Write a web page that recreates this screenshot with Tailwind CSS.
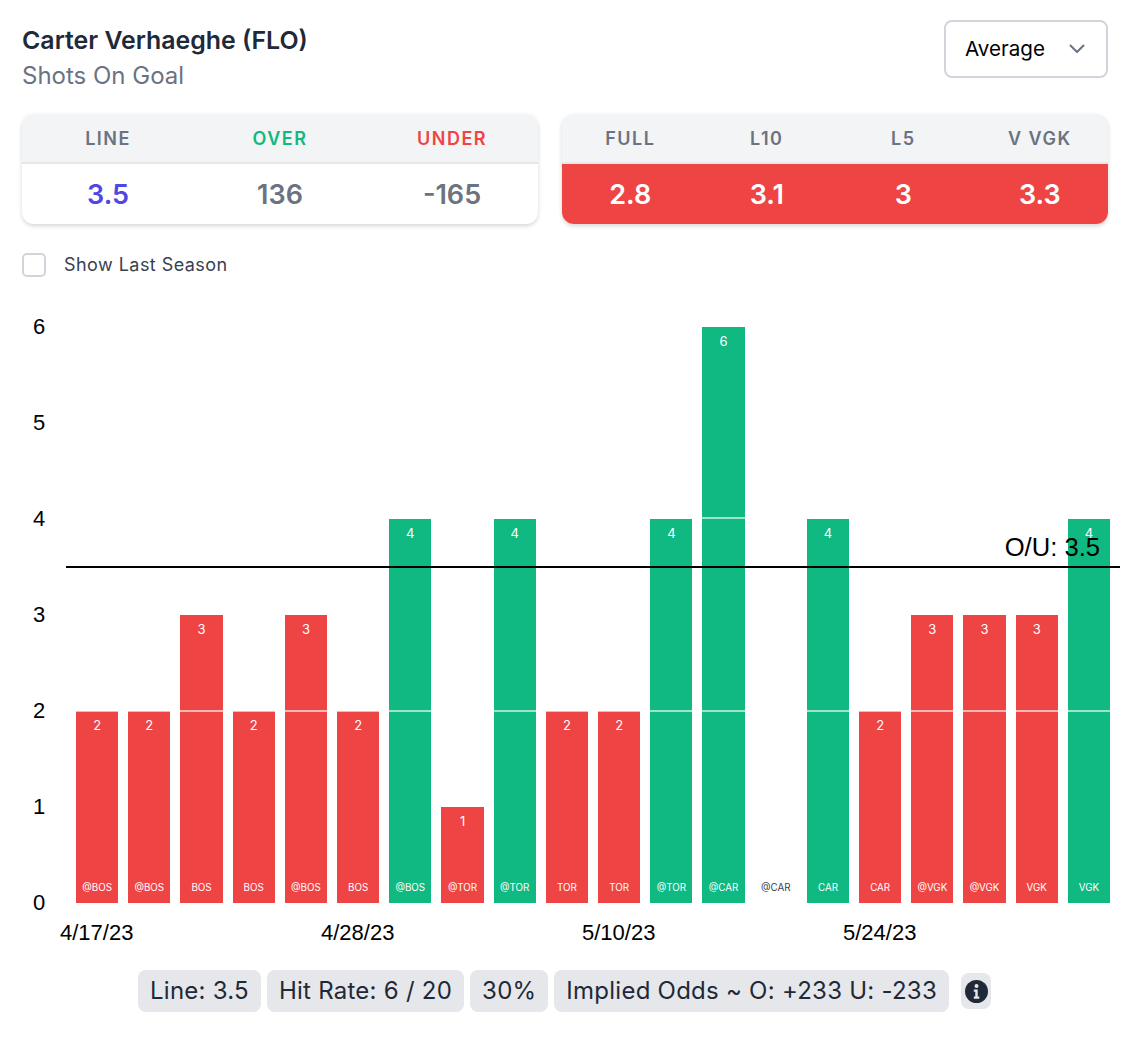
<!DOCTYPE html>
<html><head><meta charset="utf-8"><script src="https://cdn.jsdelivr.net/npm/@tailwindcss/browser@4"></script></head>
<body class="bg-white font-['Inter',sans-serif]">
<div class="w-[1132px] h-[1042px] overflow-hidden relative">
  <div class="flex justify-between pl-[22px] pr-[24px] pt-[20px]">
    <div>
      <div class="text-[24.9px] leading-[38px] font-semibold text-[#1f2937] mt-[1px] -mb-[1px]">Carter Verhaeghe (FLO)</div>
      <div class="text-[24px] leading-[36px] text-[#6b7280]">Shots On Goal</div>
    </div>
    <div class="w-[164px] h-[58px] border-2 border-[#d1d5db] rounded-[8px] flex items-center justify-between pl-[19px] pr-[19px] text-[20.6px] text-black">
      <span>Average</span>
      <svg class="w-[20px] h-[20px] text-[#6b7280]" viewBox="0 0 20 20" fill="none" stroke="currentColor" stroke-width="2" stroke-linecap="round" stroke-linejoin="round"><path d="M3.5 6.5 10 13l6.5-6.5"/></svg>
    </div>
  </div>
  <div class="flex gap-[24px] px-[22px] mt-[20px]">
    <div class="w-[516px] h-[110px] rounded-[12px] overflow-hidden shadow-[0_2px_4px_rgba(0,0,0,0.16)] bg-white">
      <div class="h-[50px] bg-[#f3f4f6] border-b-2 border-[#e5e7eb] grid grid-cols-3 items-center text-center text-[18px] font-semibold tracking-[1.5px]">
        <span class="text-[#6b7280]">LINE</span><span class="text-[#10b981]">OVER</span><span class="text-[#ef4444]">UNDER</span>
      </div>
      <div class="h-[60px] pt-[3px] grid grid-cols-3 items-center text-center text-[27px] font-semibold text-[#6b7280]">
        <span class="text-[#4f46e5]">3.5</span><span>136</span><span>-165</span>
      </div>
    </div>
    <div class="w-[546px] h-[110px] rounded-[12px] overflow-hidden shadow-[0_2px_4px_rgba(0,0,0,0.16)] bg-white">
      <div class="h-[50px] bg-[#f3f4f6] border-b-2 border-[#e5e7eb] grid grid-cols-4 items-center text-center text-[18px] font-semibold tracking-[1.5px] text-[#6b7280]">
        <span>FULL</span><span>L10</span><span>L5</span><span>V VGK</span>
      </div>
      <div class="h-[60px] pt-[3px] bg-[#ef4444] grid grid-cols-4 items-center text-center text-[27px] font-semibold text-white">
        <span>2.8</span><span>3.1</span><span>3</span><span>3.3</span>
      </div>
    </div>
  </div>
  <div class="flex items-center gap-[18px] pl-[22px] mt-[27px]">
    <div class="w-[24px] h-[24px] rounded-[5px] border-2 border-[#d1d5db] bg-white"></div>
    <span class="text-[18px] tracking-[0.45px] text-[#374151]">Show Last Season</span>
  </div>

  <div class="relative h-[640px] mt-[22px] font-['Liberation_Sans',sans-serif]">
    <div class="absolute left-[33px] top-[15px] h-[600px] flex flex-col-reverse justify-between text-[22px] leading-[24px] text-black">
      <span>0</span><span>1</span><span>2</span><span>3</span><span>4</span><span>5</span><span>6</span>
    </div>
    <div class="absolute left-[76px] top-[27px] w-[1034px] h-[576px] flex items-end gap-[10px] font-['Inter',sans-serif]">
      <div class="flex-1 h-[192px] bg-[#ef4444] relative text-white"><span class="absolute top-[5px] inset-x-0 text-center text-[13px]">2</span><span class="absolute bottom-[7px] inset-x-0 text-center text-[9.8px]">@BOS</span></div>
      <div class="flex-1 h-[192px] bg-[#ef4444] relative text-white"><span class="absolute top-[5px] inset-x-0 text-center text-[13px]">2</span><span class="absolute bottom-[7px] inset-x-0 text-center text-[9.8px]">@BOS</span></div>
      <div class="flex-1 h-[288px] bg-[#ef4444] relative text-white"><span class="absolute top-[5px] inset-x-0 text-center text-[13px]">3</span><span class="absolute bottom-[7px] inset-x-0 text-center text-[9.8px]">BOS</span></div>
      <div class="flex-1 h-[192px] bg-[#ef4444] relative text-white"><span class="absolute top-[5px] inset-x-0 text-center text-[13px]">2</span><span class="absolute bottom-[7px] inset-x-0 text-center text-[9.8px]">BOS</span></div>
      <div class="flex-1 h-[288px] bg-[#ef4444] relative text-white"><span class="absolute top-[5px] inset-x-0 text-center text-[13px]">3</span><span class="absolute bottom-[7px] inset-x-0 text-center text-[9.8px]">@BOS</span></div>
      <div class="flex-1 h-[192px] bg-[#ef4444] relative text-white"><span class="absolute top-[5px] inset-x-0 text-center text-[13px]">2</span><span class="absolute bottom-[7px] inset-x-0 text-center text-[9.8px]">BOS</span></div>
      <div class="flex-1 h-[384px] bg-[#10b981] relative text-white"><span class="absolute top-[5px] inset-x-0 text-center text-[13px]">4</span><span class="absolute bottom-[7px] inset-x-0 text-center text-[9.8px]">@BOS</span></div>
      <div class="flex-1 h-[96px] bg-[#ef4444] relative text-white"><span class="absolute top-[5px] inset-x-0 text-center text-[13px]">1</span><span class="absolute bottom-[7px] inset-x-0 text-center text-[9.8px]">@TOR</span></div>
      <div class="flex-1 h-[384px] bg-[#10b981] relative text-white"><span class="absolute top-[5px] inset-x-0 text-center text-[13px]">4</span><span class="absolute bottom-[7px] inset-x-0 text-center text-[9.8px]">@TOR</span></div>
      <div class="flex-1 h-[192px] bg-[#ef4444] relative text-white"><span class="absolute top-[5px] inset-x-0 text-center text-[13px]">2</span><span class="absolute bottom-[7px] inset-x-0 text-center text-[9.8px]">TOR</span></div>
      <div class="flex-1 h-[192px] bg-[#ef4444] relative text-white"><span class="absolute top-[5px] inset-x-0 text-center text-[13px]">2</span><span class="absolute bottom-[7px] inset-x-0 text-center text-[9.8px]">TOR</span></div>
      <div class="flex-1 h-[384px] bg-[#10b981] relative text-white"><span class="absolute top-[5px] inset-x-0 text-center text-[13px]">4</span><span class="absolute bottom-[7px] inset-x-0 text-center text-[9.8px]">@TOR</span></div>
      <div class="flex-1 h-[576px] bg-[#10b981] relative text-white"><span class="absolute top-[5px] inset-x-0 text-center text-[13px]">6</span><span class="absolute bottom-[7px] inset-x-0 text-center text-[9.8px]">@CAR</span></div>
      <div class="flex-1 h-0 relative text-[#374151]"><span class="absolute bottom-[7px] inset-x-0 text-center text-[9.8px]">@CAR</span></div>
      <div class="flex-1 h-[384px] bg-[#10b981] relative text-white"><span class="absolute top-[5px] inset-x-0 text-center text-[13px]">4</span><span class="absolute bottom-[7px] inset-x-0 text-center text-[9.8px]">CAR</span></div>
      <div class="flex-1 h-[192px] bg-[#ef4444] relative text-white"><span class="absolute top-[5px] inset-x-0 text-center text-[13px]">2</span><span class="absolute bottom-[7px] inset-x-0 text-center text-[9.8px]">CAR</span></div>
      <div class="flex-1 h-[288px] bg-[#ef4444] relative text-white"><span class="absolute top-[5px] inset-x-0 text-center text-[13px]">3</span><span class="absolute bottom-[7px] inset-x-0 text-center text-[9.8px]">@VGK</span></div>
      <div class="flex-1 h-[288px] bg-[#ef4444] relative text-white"><span class="absolute top-[5px] inset-x-0 text-center text-[13px]">3</span><span class="absolute bottom-[7px] inset-x-0 text-center text-[9.8px]">@VGK</span></div>
      <div class="flex-1 h-[288px] bg-[#ef4444] relative text-white"><span class="absolute top-[5px] inset-x-0 text-center text-[13px]">3</span><span class="absolute bottom-[7px] inset-x-0 text-center text-[9.8px]">VGK</span></div>
      <div class="flex-1 h-[384px] bg-[#10b981] relative text-white"><span class="absolute top-[5px] inset-x-0 text-center text-[13px]">4</span><span class="absolute bottom-[7px] inset-x-0 text-center text-[9.8px]">VGK</span></div>
    </div>
    <div class="absolute left-[66px] w-[1054px] top-[410px] h-[2px] bg-white/60"></div>
    <div class="absolute left-[66px] w-[1054px] top-[217px] h-[2px] bg-white/60"></div>
    <div class="absolute left-[66px] w-[1054px] top-[266px] h-[2px] bg-black"></div>
    <div class="absolute right-[32px] top-[232px] text-[25.6px] leading-[30px] text-black">O/U: 3.5</div>
    <div class="absolute top-[621px] left-[60px] text-[22px] leading-[24px] text-black">4/17/23</div>
    <div class="absolute top-[621px] left-[321px] text-[22px] leading-[24px] text-black">4/28/23</div>
    <div class="absolute top-[621px] left-[582px] text-[22px] leading-[24px] text-black">5/10/23</div>
    <div class="absolute top-[621px] left-[843px] text-[22px] leading-[24px] text-black">5/24/23</div>
  </div>

  <div class="absolute top-[970px] left-[138px] flex items-center gap-[6px] text-[24px] tracking-[0.25px] text-[#1f2937]">
    <span class="h-[42px] px-[12px] flex items-center rounded-[8px] bg-[#e5e7eb]">Line: 3.5</span>
    <span class="h-[42px] px-[12px] flex items-center rounded-[8px] bg-[#e5e7eb]">Hit Rate: 6 / 20</span>
    <span class="h-[42px] px-[12px] flex items-center rounded-[8px] bg-[#e5e7eb]">30%</span>
    <span class="h-[42px] px-[12px] flex items-center rounded-[8px] bg-[#e5e7eb]">Implied Odds ~ O: +233 U: -233</span>
    <span class="ml-[6px] w-[30px] h-[36px] rounded-[8px] bg-[#e5e7eb] flex items-center justify-center">
      <svg class="w-[23px] h-[23px]" viewBox="0 0 23 23"><circle cx="11.5" cy="11.5" r="11.5" fill="#1f2937"/><circle cx="11.5" cy="6" r="2" fill="#e5e7eb"/><path d="M8.8 9.6h3.9v7h1.6v2.2H8.8v-2.2h1.5v-4.8H8.8z" fill="#e5e7eb"/></svg>
    </span>
  </div>
</div>
</body></html>
